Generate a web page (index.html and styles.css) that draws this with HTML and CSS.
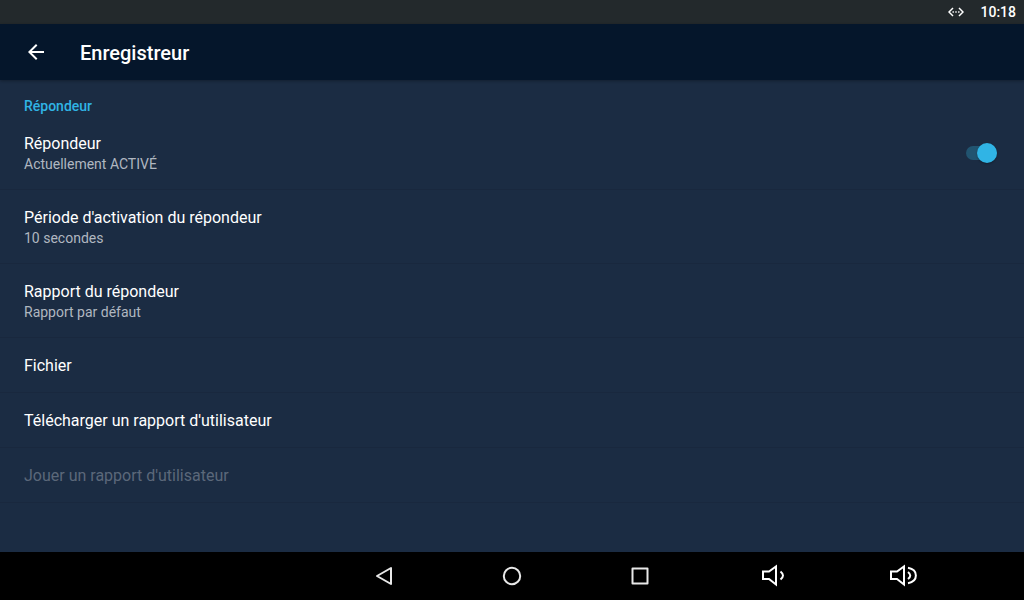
FILE: index.html
```html
<!DOCTYPE html>
<html lang="fr">
<head>
    <meta charset="UTF-8">
    <meta name="viewport" content="width=device-width, initial-scale=1.0">
    <title>Enregistreur</title>
    <link rel="stylesheet" href="styles.css">
</head>
<body>
    <div class="status-bar">
        <svg class="status-icon" width="16" height="12" viewBox="0 0 16 12" aria-hidden="true">
            <path d="M5 2L1 6l4 4M11 2l4 4-4 4" fill="none" stroke="currentColor" stroke-width="1.5"/>
            <path d="M4.5 5.3h1.4v1.4H4.5zM7.3 5.3h1.4v1.4H7.3zM10.1 5.3h1.4v1.4h-1.4z" fill="currentColor"/>
        </svg>
        <time class="clock">10:18</time>
    </div>

    <header class="app-bar">
        <button type="button" class="back" aria-label="Retour">
            <svg width="24" height="24" viewBox="0 0 24 24" fill="currentColor" aria-hidden="true">
                <path d="M20 11H7.83l5.59-5.59L12 4l-8 8 8 8 1.41-1.41L7.83 13H20v-2z"/>
            </svg>
        </button>
        <h1 class="title">Enregistreur</h1>
    </header>

    <main class="settings">
        <h2 class="category">Répondeur</h2>
        <ul class="list">
            <li class="item">
                <label class="row" for="answering">
                    <span class="text">
                        <span class="name">Répondeur</span>
                        <span class="summary">Actuellement ACTIVÉ</span>
                    </span>
                    <input type="checkbox" role="switch" class="switch" id="answering" checked>
                </label>
            </li>
            <li class="item">
                <button type="button" class="row">
                    <span class="text">
                        <span class="name">Période d'activation du répondeur</span>
                        <span class="summary">10 secondes</span>
                    </span>
                </button>
            </li>
            <li class="item">
                <button type="button" class="row">
                    <span class="text">
                        <span class="name">Rapport du répondeur</span>
                        <span class="summary">Rapport par défaut</span>
                    </span>
                </button>
            </li>
            <li class="item">
                <button type="button" class="row"><span class="name">Fichier</span></button>
            </li>
            <li class="item">
                <button type="button" class="row"><span class="name">Télécharger un rapport d'utilisateur</span></button>
            </li>
            <li class="item">
                <button type="button" class="row" disabled><span class="name">Jouer un rapport d'utilisateur</span></button>
            </li>
        </ul>
    </main>

    <nav class="nav-bar">
        <button type="button" class="nav-button nav-back" aria-label="Retour">
            <svg width="24" height="24" viewBox="0 0 24 24" aria-hidden="true">
                <path d="M19 4v16L5 12z"/>
            </svg>
        </button>
        <button type="button" class="nav-button" aria-label="Accueil">
            <svg width="24" height="24" viewBox="0 0 24 24" aria-hidden="true">
                <circle cx="12" cy="12" r="8.2"/>
            </svg>
        </button>
        <button type="button" class="nav-button" aria-label="Applications récentes">
            <svg width="24" height="24" viewBox="0 0 24 24" aria-hidden="true">
                <rect x="4.5" y="4.5" width="15" height="15"/>
            </svg>
        </button>
        <button type="button" class="nav-button" aria-label="Baisser le volume">
            <svg class="volume" width="48" height="24" viewBox="0 0 48 24" aria-hidden="true">
                <path d="M19 7.5h6L32 2.500v18l-7-5.500h-6z"/>
                <path d="M36.500 7.500q5 4 0 8"/>
            </svg>
        </button>
        <button type="button" class="nav-button" aria-label="Augmenter le volume">
            <svg class="volume" width="48" height="24" viewBox="0 0 48 24" aria-hidden="true">
                <path d="M19 7.5h6L32 2.500v18l-7-5.500h-6z"/>
                <path d="M36 8q4.500 3.500 0 7M36 3.800c10.500 2 10.500 13.400 0 15.400"/>
            </svg>
        </button>
    </nav>
</body>
</html>
```

FILE: styles.css
```css
:root {
    --accent: #30b4e5;
    --surface: #1b2c43;
    --bar: #05162b;
    --status: #23292c;
}

* {
    box-sizing: border-box;
}

body {
    margin: 0;
    min-height: 100vh;
    display: flex;
    flex-direction: column;
    background: var(--surface);
    color: #fff;
    font-family: Roboto, "Liberation Sans", sans-serif;
}

button {
    margin: 0;
    padding: 0;
    border: 0;
    background: none;
    color: inherit;
    font: inherit;
    text-align: left;
}

svg {
    display: block;
}

.status-bar {
    height: 24px;
    padding: 0 8px;
    display: flex;
    align-items: center;
    justify-content: flex-end;
    gap: 16px;
    background: var(--status);
}

.clock {
    font-size: 14px;
    font-weight: 500;
    line-height: 24px;
}

.app-bar {
    height: 56px;
    padding: 0 24px;
    display: flex;
    align-items: center;
    gap: 32px;
    background: var(--bar);
    box-shadow: 0 1px 3px rgba(0, 0, 0, 0.3);
}

.title {
    margin: 0;
    padding-top: 2px;
    font-size: 20px;
    font-weight: 500;
    line-height: 28px;
}

.settings {
    flex: 1;
}

.category {
    margin: 0;
    padding: 16px 24px 0;
    color: var(--accent);
    font-size: 14px;
    font-weight: 500;
    line-height: 20px;
}

.list {
    margin: 0;
    padding: 0;
    list-style: none;
}

.item {
    border-bottom: 1px solid #19283e;
}

.row {
    width: 100%;
    padding: 17px 24px 15px;
    display: flex;
    align-items: center;
    justify-content: space-between;
}

.row:disabled {
    color: #5b687a;
}

.name,
.summary {
    display: block;
}

.name {
    font-size: 16px;
    line-height: 22px;
}

.summary {
    color: #b0b7c0;
    font-size: 14px;
    line-height: 19px;
}

.switch {
    appearance: none;
    width: 31px;
    height: 14px;
    margin: 0 3px 2px 0;
    display: flex;
    align-items: center;
    border-radius: 7px;
    background: #215470;
}

.switch::before {
    content: '';
    flex: none;
    width: 20px;
    height: 20px;
    margin: -3px 0;
    border-radius: 50%;
    background: #b0b7c0;
    box-shadow: 0 1px 2px rgba(0, 0, 0, 0.3);
}

.switch:checked::before {
    margin-left: auto;
    background: var(--accent);
}

/* seven equal columns, home sits in the middle one */
.nav-bar {
    height: 48px;
    padding: 0 6.25%;
    display: grid;
    grid-template-columns: repeat(7, 1fr);
    background: #000;
}

.nav-button {
    display: flex;
    align-items: center;
    justify-content: center;
}

.nav-back {
    grid-column: 3;
}

.nav-button svg {
    fill: none;
    stroke: #e8e8e8;
    stroke-width: 2;
    stroke-linejoin: round;
}

.nav-button .volume {
    stroke: #fff;
    stroke-linejoin: miter;
}
```
